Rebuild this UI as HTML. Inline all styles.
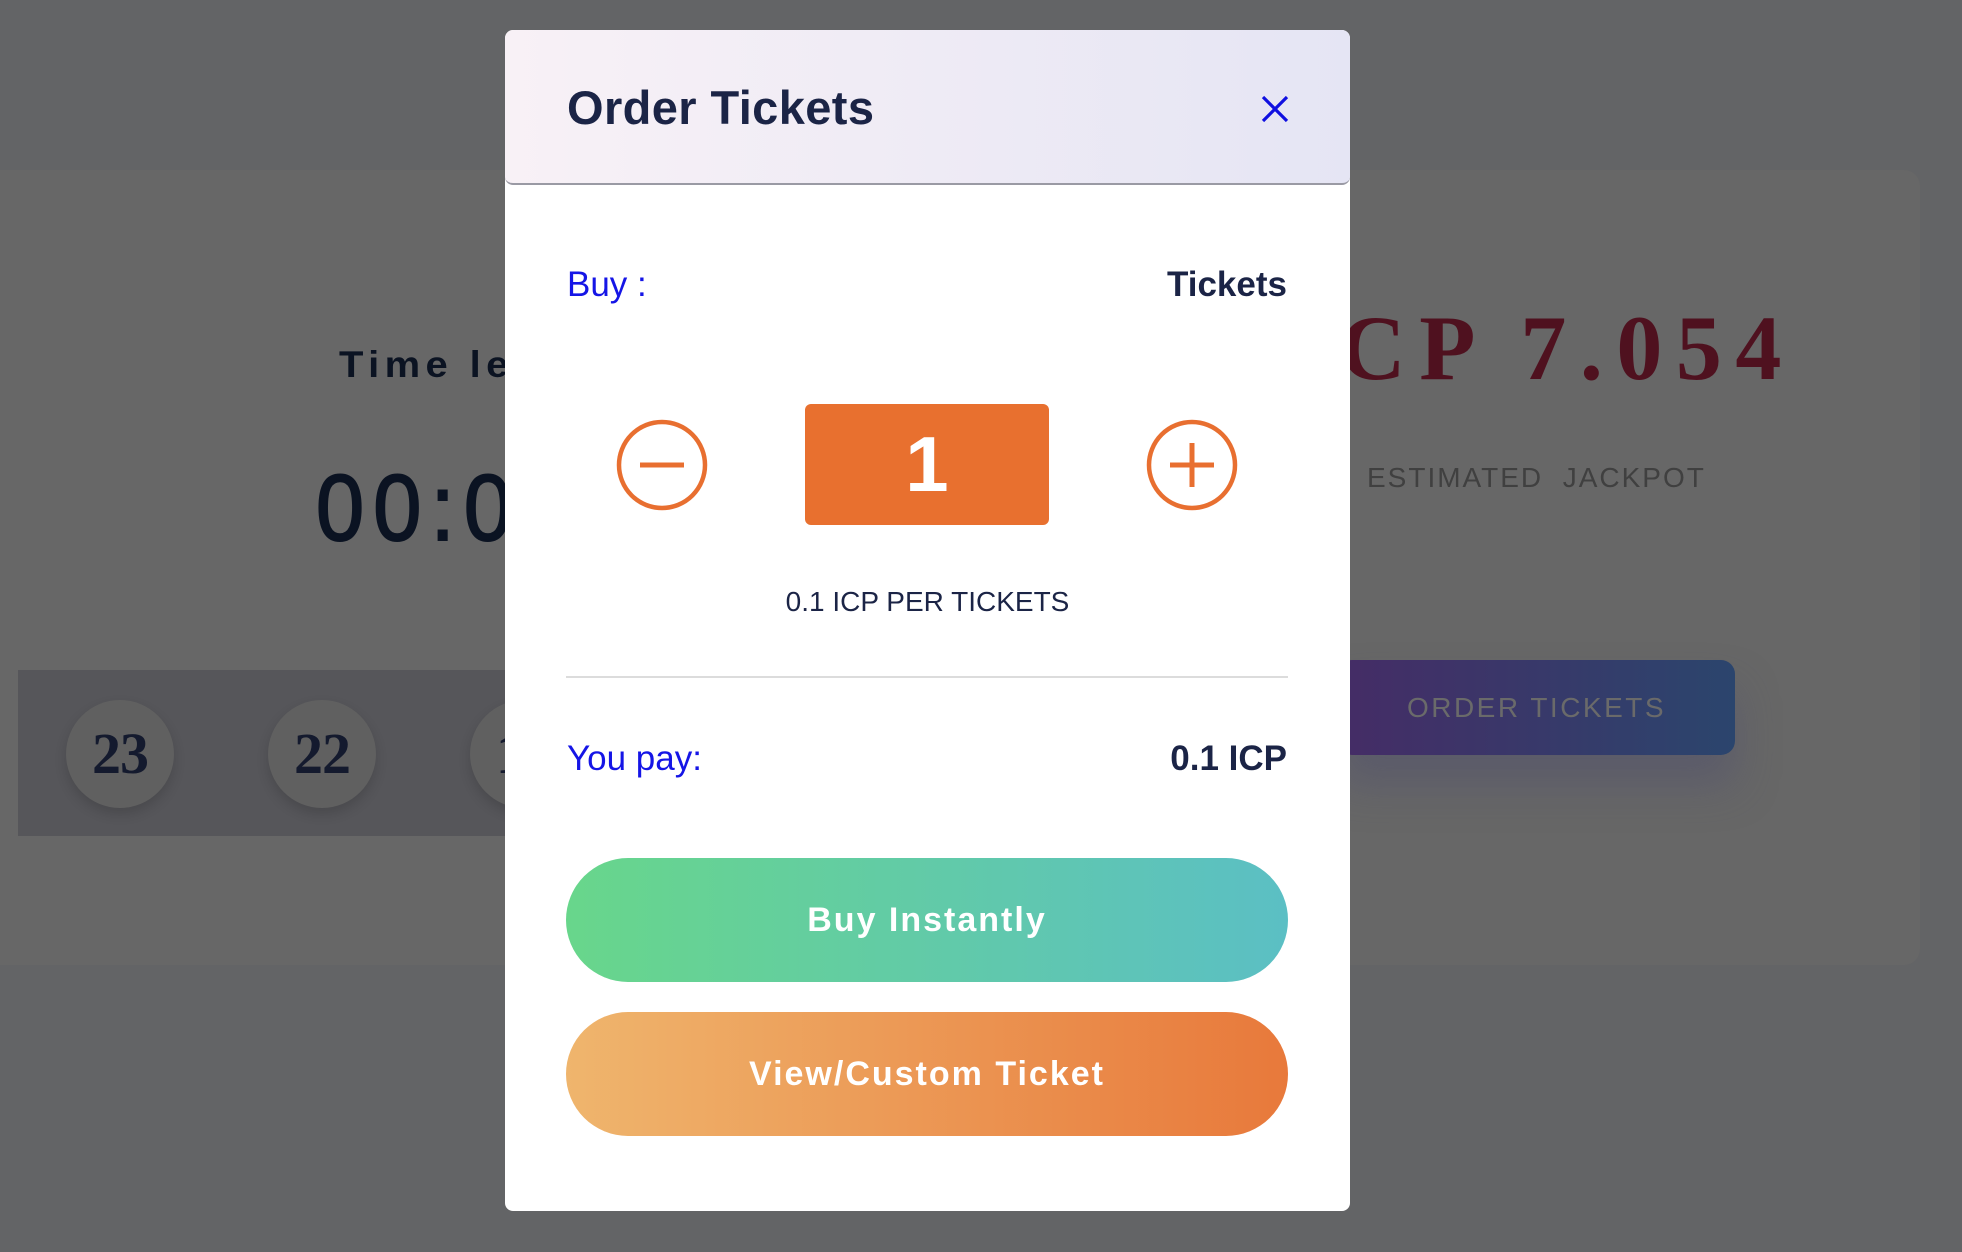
<!DOCTYPE html>
<html><head><meta charset="utf-8"><style>
*{margin:0;padding:0;box-sizing:border-box}
body{width:1962px;height:1252px;background:#636466;position:relative;overflow:hidden;font-family:"Liberation Sans",sans-serif}
.card{position:absolute;left:0;top:170px;width:1920px;height:795px;background:#676767;border-radius:0 16px 16px 0}
.abs{position:absolute;white-space:nowrap}
.band{position:absolute;left:18px;top:670px;width:500px;height:166px;background:#56565a}
.ball{position:absolute;width:108px;height:108px;border-radius:50%;background:#606060;box-shadow:0 6px 12px rgba(0,0,0,.15);font-family:"Liberation Serif",serif;font-weight:bold;font-size:58px;color:#141a2e;text-align:center;line-height:108px;letter-spacing:-1px}
.ot{position:absolute;left:1338px;top:660px;width:397px;height:95px;border-radius:14px;background:linear-gradient(90deg,#452c66,#2b456d);box-shadow:0 30px 40px rgba(80,80,110,.5);color:#6a6a6a;font-size:28px;letter-spacing:2.5px;text-align:center;line-height:95px}
.modal{position:absolute;left:505px;top:30px;width:845px;height:1181px;background:#fff;border-radius:8px;overflow:hidden}
.hdr{height:155px;background:linear-gradient(90deg,#f8f1f6,#e5e5f4);border-bottom:2px solid #9a9aa4;border-radius:8px 8px 8px 8px;position:relative}
.btn{position:absolute;left:61px;width:722px;height:124px;border-radius:62px;color:#fff;font-weight:bold;font-size:34px;letter-spacing:2px;text-align:center;line-height:124px}
</style></head><body>
<div class="card"></div>
<div class="abs" style="left:339px;top:344px;font-size:37px;font-weight:900;letter-spacing:5px;color:#0b1322;transform:scaleX(1.08);transform-origin:left">Time left</div>
<div class="abs" style="left:316px;top:461px;font-size:94px;letter-spacing:10px;color:#0b1322;-webkit-text-stroke:2px #0b1322;line-height:1;transform:scaleX(0.92);transform-origin:left">00:00</div>
<div class="band"></div>
<div class="ball" style="left:66px;top:700px">23</div>
<div class="ball" style="left:268px;top:700px">22</div>
<div class="ball" style="left:470px;top:700px">19</div>
<div class="abs" style="left:1290px;top:295px;font-family:'Liberation Serif',serif;font-weight:bold;font-size:92px;letter-spacing:13.5px;color:#4f111f">ICP 7.054</div>
<div class="abs" style="left:1367px;top:462px;font-size:28px;letter-spacing:2px;color:#404040">ESTIMATED&nbsp; JACKPOT</div>
<div class="ot">ORDER TICKETS</div>

<div class="modal">
 <div class="hdr">
  <div class="abs" style="left:62px;top:50px;font-size:47px;font-weight:bold;letter-spacing:0.4px;color:#1b2446">Order Tickets</div>
  <svg class="abs" style="left:756px;top:65px" width="28" height="28" viewBox="0 0 28 28"><path d="M2 2L26 26M26 2L2 26" stroke="#1010e0" stroke-width="3.2"/></svg>
 </div>
 <div class="abs" style="left:62px;top:235px;font-size:35px;color:#1515e6">Buy :</div>
 <div class="abs" style="right:63px;top:235px;font-size:35px;font-weight:bold;color:#1b2446">Tickets</div>
 <svg class="abs" style="left:110px;top:388px" width="94" height="94" viewBox="0 0 94 94"><circle cx="47" cy="47" r="43" fill="none" stroke="#e86f30" stroke-width="4.5"/><path d="M25 47H69" stroke="#e86f30" stroke-width="5"/></svg>
 <div class="abs" style="left:300px;top:374px;width:244px;height:121px;background:#e8702f;border-radius:6px;color:#fff;font-size:78px;font-weight:bold;text-align:center;line-height:121px">1</div>
 <svg class="abs" style="left:640px;top:388px" width="94" height="94" viewBox="0 0 94 94"><circle cx="47" cy="47" r="43" fill="none" stroke="#e86f30" stroke-width="4.5"/><path d="M25 47H69M47 25V69" stroke="#e86f30" stroke-width="5"/></svg>
 <div class="abs" style="left:0;width:845px;text-align:center;top:556px;font-size:28px;color:#1b2446">0.1 ICP PER TICKETS</div>
 <div class="abs" style="left:61px;top:646px;width:722px;height:2px;background:#dcdcdc"></div>
 <div class="abs" style="left:62px;top:709px;font-size:35px;color:#1515e6">You pay:</div>
 <div class="abs" style="right:63px;top:709px;font-size:35px;font-weight:bold;color:#1b2446">0.1 ICP</div>
 <div class="btn" style="top:828px;background:linear-gradient(90deg,#68d68b,#5bbfc4)">Buy Instantly</div>
 <div class="btn" style="top:982px;background:linear-gradient(90deg,#efb56d,#e8793b)">View/Custom Ticket</div>
</div>
</body></html>
